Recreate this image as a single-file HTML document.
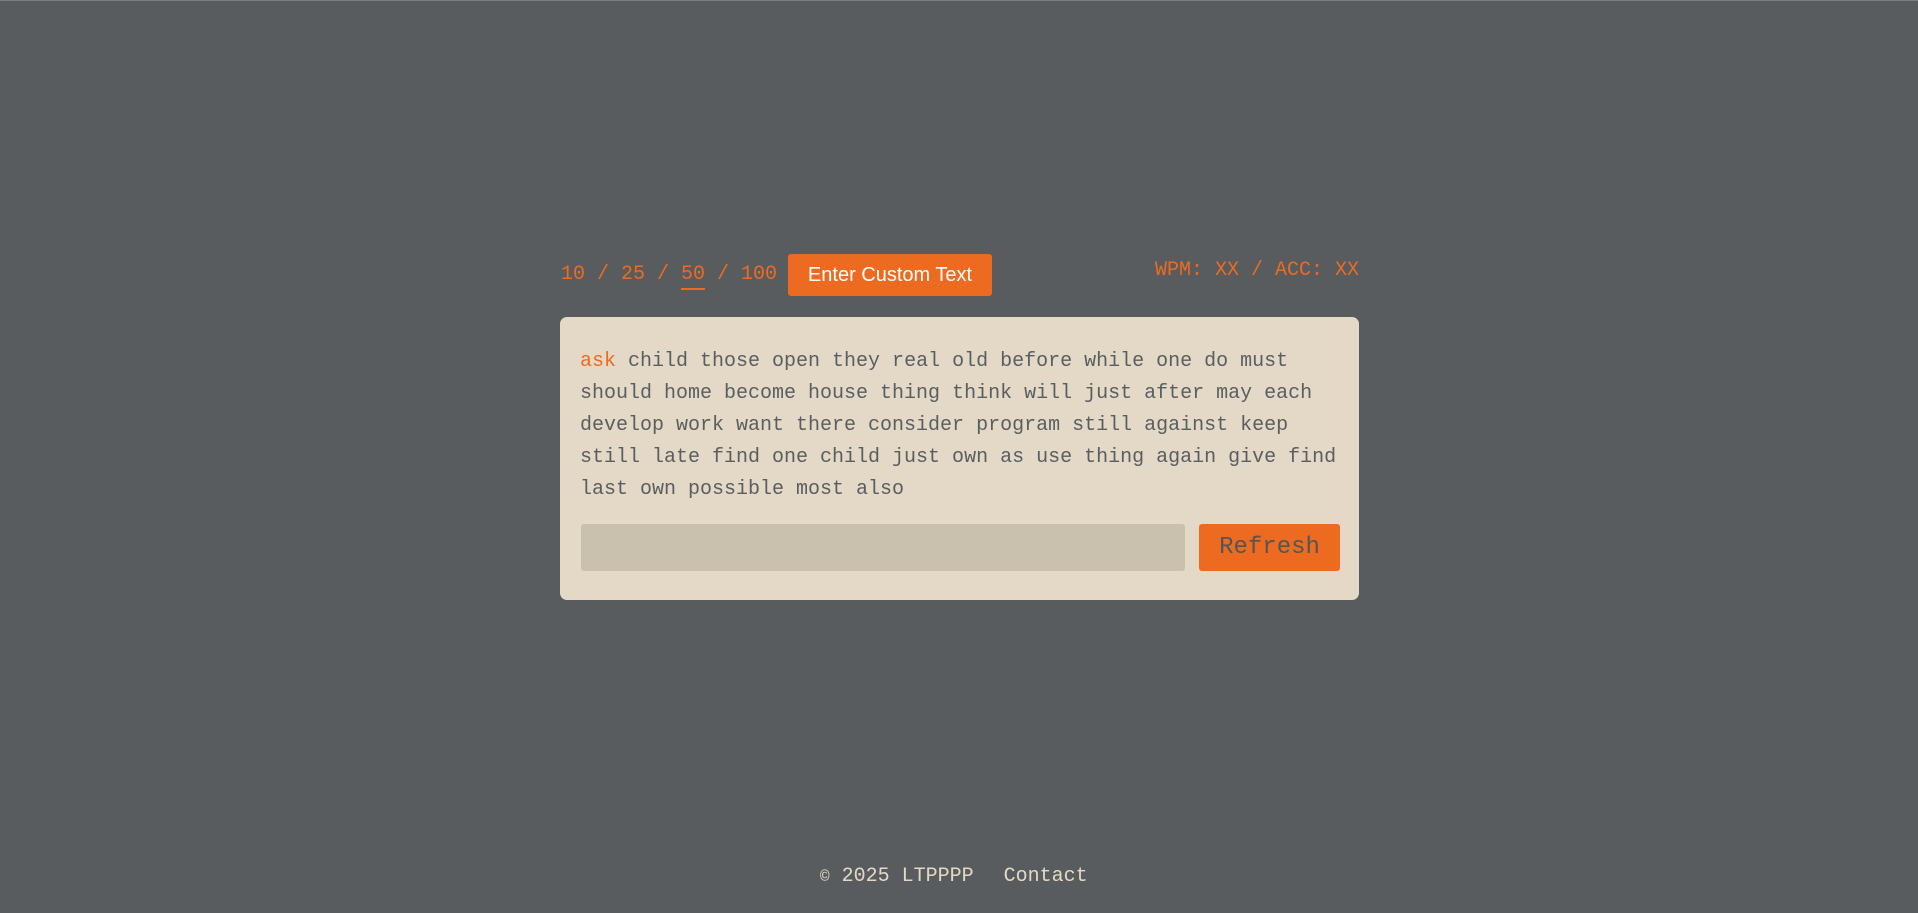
<!DOCTYPE html>
<html><head><meta charset="utf-8"><style>
html,body{margin:0;padding:0;}
body{width:1918px;height:913px;background:#585c5f;position:relative;overflow:hidden;font-family:"Liberation Mono",monospace;border-top:1px solid #7a7d80;box-sizing:border-box;}
.mono{font-family:"Liberation Mono",monospace;}
#nums{position:absolute;left:561px;top:260px;font-size:20px;color:#ec6b21;line-height:28px;}
#nums u{text-decoration:none;border-bottom:2px solid #ec6b21;padding-bottom:2px;}
#btn{position:absolute;left:788px;top:253px;width:204px;height:42px;background:#ec6b21;border-radius:3px;color:#fff;font-family:"Liberation Sans",sans-serif;font-size:20px;line-height:42px;text-align:center;}
#wpm{position:absolute;right:559px;top:256px;font-size:20px;color:#ec6b21;line-height:28px;}
#card{position:absolute;left:560px;top:316px;width:799px;height:283px;background:#e3d9c6;border-radius:7px;}
#txt{position:absolute;left:20px;top:29px;width:770px;font-size:20px;line-height:32px;color:#5a5e61;}
#txt span{color:#ec6b21;}
#inp{position:absolute;left:21px;top:207px;width:604px;height:47px;background:#c9c0ae;border-radius:3px;}
#ref{position:absolute;left:639px;top:207px;width:141px;height:47px;background:#ec6b21;border-radius:3px;color:#555;font-size:24px;line-height:47px;text-align:center;}
#foot{position:absolute;left:820px;top:862px;font-size:20px;color:#e3d9c6;line-height:28px;white-space:pre;}
</style></head><body>
<div id="nums" class="mono">10 / 25 / <u>50</u> / 100</div>
<div id="btn">Enter Custom Text</div>
<div id="wpm">WPM: XX / ACC: XX</div>
<div id="card">
<div id="txt"><span>ask</span> child those open they real old before while one do must should home become house thing think will just after may each develop work want there consider program still against keep still late find one child just own as use thing again give find last own possible most also</div>
<div id="inp"></div>
<div id="ref">Refresh</div>
</div>
<div id="foot"><span style="font-size:16px">©</span> 2025 LTPPPP<span style="display:inline-block;width:30px"></span>Contact</div>
</body></html>
